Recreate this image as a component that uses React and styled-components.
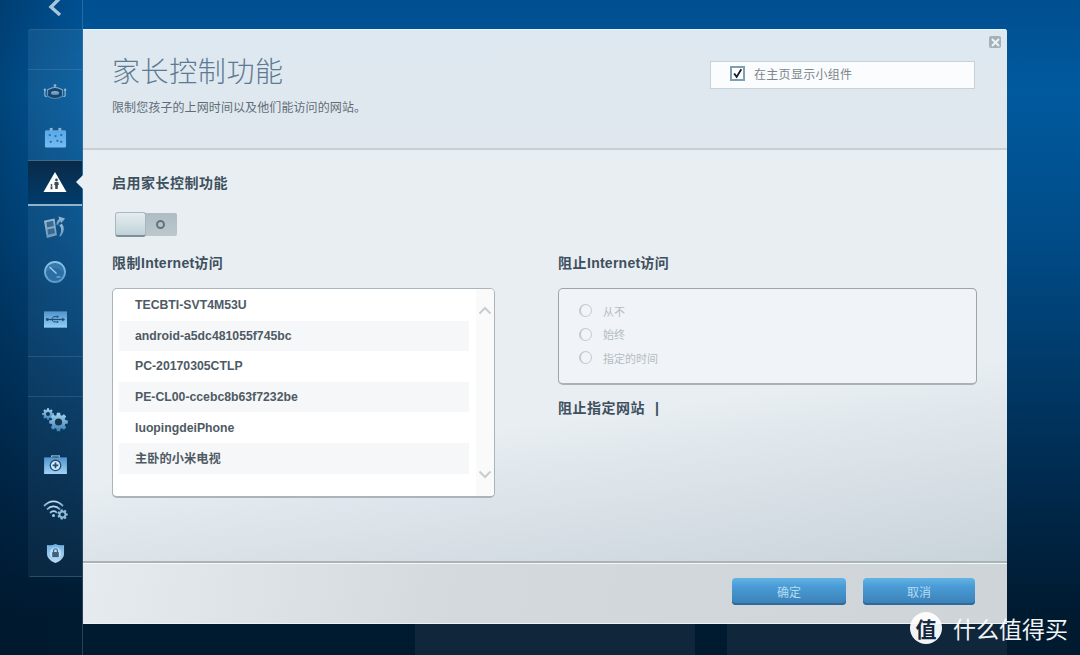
import React from "react";
import styled, { createGlobalStyle } from "styled-components";

const Global = createGlobalStyle`
  html, body { margin: 0; padding: 0; background: #001a30; }
  * { box-sizing: border-box; }
`;

const CJK = `"Noto Sans CJK SC", "Liberation Sans", sans-serif`;

const Page = styled.div`
  position: relative;
  width: 1080px;
  height: 655px;
  overflow: hidden;
  display: flex;
  padding-left: 28px;
  font-family: ${CJK};
  background:
    linear-gradient(90deg, rgba(0, 22, 44, 0.3) 0, rgba(0, 22, 44, 0) 84px),
    linear-gradient(180deg, #004f90 0%, #005a9e 14%, #004c88 36%, #003a69 56%, #00284a 76%, #001a30 94%);
`;

const Rail = styled.aside`
  width: 55px;
  height: 655px;
  flex: none;
  display: flex;
  flex-direction: column;
  border-right: 1px solid rgba(170, 205, 230, 0.22);
`;

const BackSlot = styled.div`
  height: 29px;
  display: flex;
  justify-content: center;
  align-items: flex-start;
  svg { display: block; margin-top: -4px; }
`;

const Nav = styled.nav`
  height: 548px;
  display: flex;
  flex-direction: column;
  background: linear-gradient(180deg, rgba(90, 150, 190, 0.18), rgba(70, 110, 140, 0.13));
  border: solid rgba(170, 205, 230, 0.17);
  border-width: 1px 0;
  border-radius: 3px 0 0 3px;
`;

const NavGap = styled.div`
  flex: none;
  height: ${p => p.$h}px;
  border-bottom: 1px solid rgba(170, 205, 230, 0.16);
`;

const NavGroup = styled.div`
  flex: none;
  padding-top: ${p => p.$top || 0}px;
`;

const NavItem = styled.div`
  position: relative;
  height: ${p => p.$h || 44.5}px;
  display: flex;
  align-items: center;
  justify-content: center;
  ${p => p.$active && `
    background: linear-gradient(180deg, #0a2a48, #003c6c);
    border-top: 1px solid #3c6a8c;
    border-bottom: 2px solid #8fb4cc;
  `}
`;

const ActiveNotch = styled.span`
  position: absolute;
  right: -1px;
  top: 50%;
  margin-top: -7px;
  border: 7px solid transparent;
  border-right-color: #e8eef2;
  border-left-width: 0;
`;

const Main = styled.div`
  width: 924px;
  flex: none;
  display: flex;
  flex-direction: column;
`;

const Dialog = styled.section`
  position: relative;
  margin-top: 29px;
  height: 595px;
  flex: none;
  display: flex;
  flex-direction: column;
  border-radius: 0 3px 0 0;
  overflow: hidden;
  background: #e6ecf0;
`;

const Header = styled.header`
  height: 121px;
  flex: none;
  display: flex;
  justify-content: space-between;
  padding: 0 32px 0 29px;
  background: linear-gradient(180deg, #dee8f0, #e0e8ee);
  border-top: 1px solid #e8f4fa;
  border-bottom: 2px solid #c8d0d5;
`;

const TitleBlock = styled.div`
  padding-top: 22px;
`;

const Title = styled.h1`
  margin: 0;
  font-size: 28px;
  line-height: 36px;
  font-weight: 300;
  letter-spacing: 0.6px;
  color: #5c7a92;
`;

const Subtitle = styled.p`
  margin: 10px 0 0;
  font-size: 12px;
  line-height: 18px;
  letter-spacing: 0.1px;
  color: #5f6d78;
`;

const WidgetToggle = styled.label`
  margin-top: 31px;
  width: 265px;
  height: 28px;
  display: flex;
  align-items: center;
  gap: 9px;
  padding: 0 0 3px 19px;
  background: #fafcfd;
  border: 1px solid #c6d1d9;
  font-size: 12px;
  letter-spacing: 0.3px;
  color: #7b858c;
`;

const CheckBox = styled.span`
  width: 15px;
  height: 15px;
  display: flex;
  align-items: center;
  justify-content: center;
  background: #fff;
  border: 2px solid #7f9fb4;
`;

const CloseButton = styled.button`
  position: absolute;
  top: 7px;
  right: 6px;
  width: 12px;
  height: 12px;
  padding: 0;
  border: none;
  border-radius: 2px;
  background: #a4b1ba;
  display: flex;
  align-items: center;
  justify-content: center;
`;

const Body = styled.div`
  flex: 1;
  padding: 21px 29px 0;
  background:
    linear-gradient(172deg, rgba(255,255,255,0) 62%, rgba(190,202,210,0.75) 100%),
    #e8eef2;
`;

const SectionLabel = styled.h2`
  margin: 0;
  font-size: 14px;
  line-height: 22px;
  font-weight: 700;
  letter-spacing: 0.5px;
  color: #3f505d;
`;

const LatinWord = styled.span`
  font-family: "Liberation Sans", sans-serif;
  letter-spacing: 0.25px;
`;

const Switch = styled.div`
  margin: 19px 0 0 3px;
  width: 62px;
  height: 25px;
  position: relative;
  display: flex;
  justify-content: flex-end;
`;

const SwitchTrack = styled.div`
  width: 33px;
  margin: 1px 0;
  display: flex;
  align-items: center;
  justify-content: center;
  background: linear-gradient(180deg, #aebcc3, #bcc7cc);
  border-radius: 0 2px 2px 0;
`;

const SwitchDot = styled.span`
  width: 9px;
  height: 9px;
  border-radius: 50%;
  border: 2px solid #5f7482;
`;

const SwitchThumb = styled.div`
  position: absolute;
  left: 0;
  top: 0;
  width: 31px;
  height: 25px;
  border-radius: 3px;
  background: linear-gradient(180deg, #e4edf0, #c0d2d8);
  border: 1px solid #aab8be;
  border-bottom: 2px solid #7f8f97;
`;

const Columns = styled.div`
  margin-top: 14px;
  display: flex;
  gap: 63px;
`;

const ColLeft = styled.div`
  width: 383px;
  flex: none;
`;

const ColRight = styled.div`
  width: 419px;
  flex: none;
`;

const DeviceBox = styled.div`
  margin-top: 14px;
  height: 210px;
  display: flex;
  justify-content: space-between;
  background: #fff;
  border: 1px solid #aab4bb;
  border-bottom: 2px solid #aab4bb;
  border-radius: 5px;
  overflow: hidden;
`;

const DeviceList = styled.ul`
  list-style: none;
  margin: 0;
  padding: 1px 0 0 6px;
  width: 356px;
`;

const Device = styled.li`
  height: 30.6px;
  display: flex;
  align-items: center;
  padding-left: 16px;
  font-family: "Liberation Sans", "Noto Sans CJK SC", sans-serif;
  font-size: 12.25px;
  font-weight: 700;
  color: #4e5a64;
  background: ${p => (p.$alt ? "#f6f7f8" : "transparent")};
`;

const ScrollBar = styled.div`
  width: 18px;
  display: flex;
  flex-direction: column;
  justify-content: space-between;
  align-items: center;
  padding: 17px 0;
  background: #fafafa;
`;

const BlockPanel = styled.div`
  margin-top: 14px;
  height: 97px;
  padding: 11.5px 0 0 20px;
  display: flex;
  flex-direction: column;
  gap: 3px;
  background: #f0f4f8;
  border: 1px solid #9aa5ad;
  border-bottom: 2px solid #a8b2b9;
  border-radius: 5px;
`;

const RadioRow = styled.div`
  height: 20.5px;
  display: flex;
  align-items: center;
  gap: 11px;
  font-size: 11px;
  color: #b4bcc2;
`;

const RadioDot = styled.span`
  width: 13px;
  height: 13px;
  border-radius: 50%;
  border: 1px solid #c3cbd0;
  border-left-width: 2px;
  background: #f2f5f8;
`;

const SiteLabel = styled(SectionLabel)`
  margin-top: 11px;
`;

const Caret = styled.span`
  margin-left: 10px;
  font-family: "Liberation Sans", sans-serif;
`;

const Footer = styled.footer`
  height: 63px;
  flex: none;
  display: flex;
  justify-content: flex-end;
  gap: 17px;
  padding: 15px 32px 0 0;
  background: linear-gradient(100deg, #e6ebef 0%, #d4d9dd 40%, #ced4d8 100%);
  border-top: 2px solid #aab3b8;
  box-shadow: inset 0 1px 0 #f4f7f8;
  border-bottom: 1px solid #eef2f4;
`;

const ActionButton = styled.button`
  width: ${p => p.$w}px;
  height: 27px;
  padding: 0;
  border: none;
  border-radius: 4px;
  font-family: ${CJK};
  font-size: 12px;
  color: #b4dcf2;
  background: linear-gradient(180deg, #62b4e6 0%, #4a9cd6 30%, #3a7fb6 100%);
  box-shadow: inset 0 -2px 0 #2f6a98;
`;

const BackCards = styled.div`
  flex: 1;
  display: flex;
  gap: 32px;
  padding-left: 332px;
`;

const BackCard = styled.div`
  width: 280px;
  background: #10263b;
`;

const Watermark = styled.div`
  position: absolute;
  left: 910px;
  top: 612px;
  display: flex;
  align-items: center;
  gap: 11px;
  font-size: 23px;
  line-height: 32px;
  color: #fff;
  opacity: 0.95;
`;

const WaterBadge = styled.span`
  width: 32px;
  height: 32px;
  border-radius: 50%;
  background: #fff;
  color: #10263b;
  font-size: 21px;
  font-weight: 700;
  line-height: 32px;
  text-align: center;
`;

const Grad = ({ id, from = "#7fc0ee", to = "#3f86c0" }) => (
  <defs>
    <linearGradient id={id} x1="0" y1="0" x2="0" y2="1">
      <stop offset="0" stopColor={from} />
      <stop offset="1" stopColor={to} />
    </linearGradient>
  </defs>
);

const RouterIcon = () => (
  <svg width="24" height="19" viewBox="0 0 26 20">
    <Grad id="r1" from="#8fb6d2" to="#5688ae" />
    <path d="M5 7c3-1.500 5-2.500 8-2.500s5 1 8 2.500v7c-3 1.800-5 2.500-8 2.500s-5-.7-8-2.500z" fill="#15446c" stroke="url(#r1)" strokeWidth="1.100" />
    <ellipse cx="13" cy="10.500" rx="4.500" ry="2.200" fill="url(#r1)" />
    <circle cx="13" cy="2.500" r="1.500" fill="#8fb6d2" />
    <circle cx="2" cy="7" r="1.300" fill="#8fb6d2" />
    <circle cx="24" cy="7" r="1.300" fill="#8fb6d2" />
    <path d="M2 7v6c0 1 1 1.500 2 1.500M24 7v6c0 1-1 1.500-2 1.500" stroke="#8fb6d2" strokeWidth="1.300" fill="none" />
  </svg>
);

const CalendarIcon = () => (
  <svg width="23" height="21" viewBox="0 0 24 21">
    <Grad id="c1" from="#58a8ea" to="#74bcf2" />
    <rect x="1" y="3" width="22" height="18" rx="1.500" fill="url(#c1)" />
    <rect x="6" y="0.500" width="3" height="3" fill="#8fb4cc" />
    <rect x="15" y="0.500" width="3" height="3" fill="#8fb4cc" />
    {[[6, 8], [12, 9], [18, 8], [7, 15], [14, 14], [18, 15]].map(([x, y]) => (
      <circle key={x + "-" + y} cx={x} cy={y} r="1.200" fill="#2a6ca6" />
    ))}
  </svg>
);

const ParentalIcon = () => (
  <svg width="24" height="22" viewBox="0 0 24 22">
    <path d="M12 1L23.500 21H.500z" fill="#fff" />
    <circle cx="13.500" cy="9" r="1.400" fill="#3a4c5c" />
    <path d="M11.700 11h3.600l.5 3h-.9l-.2 4h-2.400l-.2-4h-.9z" fill="#3a4c5c" />
    <circle cx="8.500" cy="14" r="0.900" fill="#3a4c5c" />
    <path d="M7.600 15.300h1.800v3H7.600z" fill="#3a4c5c" />
  </svg>
);

const UpdateIcon = () => (
  <svg width="24" height="23" viewBox="0 0 25 24">
    <Grad id="u1" from="#9cbdd6" to="#6d9abc" />
    <path d="M1 5l11-2.500L14.500 20 4 23z" fill="url(#u1)" />
    <path d="M3.500 6.500l7-1.500 .8 5.500-7 1.500zM4.600 14l7-1.500 .8 5.500-7 1.500z" fill="#3a6a90" />
    <path d="M14 9c0-3 1-5 3-6l-1-2.500 7 2-4 5-1-2c-1.200 1-1.800 2-2 3.500z" fill="url(#u1)" />
    <path d="M19.500 8c3 3 3 8-1 13-1 .5-1.500.3-1.500-.3 2-3 3-8 0-11z" fill="url(#u1)" />
  </svg>
);

const GaugeIcon = () => (
  <svg width="22" height="22" viewBox="0 0 22 22">
    <Grad id="g1" from="#8cc4ea" to="#5a9cc8" />
    <circle cx="11" cy="11" r="10" fill="#2a6ea4" stroke="url(#g1)" strokeWidth="1.800" />
    <path d="M2.500 11a8.500 8.500 0 0117 0c-3-1.500-5-4-8.500-4s-5.500 2.500-8.500 4z" fill="#3f86b8" opacity="0.55" />
    <path d="M5.500 6l7 6.500" stroke="#a8d0ec" strokeWidth="1.300" />
    <path d="M12.500 16h4" stroke="#7ab0d6" strokeWidth="1.300" />
  </svg>
);

const UsbIcon = () => (
  <svg width="23" height="17" viewBox="0 0 24 17">
    <Grad id="s1" from="#4f94cc" to="#93cff4" />
    <rect width="24" height="17" fill="url(#s1)" />
    <path d="M3 8.500h17" stroke="#1d4f78" strokeWidth="1.300" />
    <path d="M19 6.500l3 2-3 2z" fill="#1d4f78" />
    <circle cx="3.500" cy="8.500" r="1.500" fill="#1d4f78" />
    <path d="M8 8.500l2-3h3M8 8.500l2 2.500h3" stroke="#1d4f78" strokeWidth="1" fill="none" />
    <rect x="13" y="4.500" width="2" height="2" fill="#1d4f78" />
    <circle cx="14" cy="11" r="1" fill="#1d4f78" />
  </svg>
);

const gearPath = (cx, cy, r, n = 8) => {
  let d = "";
  for (let i = 0; i < n; i++) {
    const a = (i / n) * Math.PI * 2;
    const w = Math.PI / n / 1.600;
    const pts = [
      [r * 0.78, a - w * 1.200],
      [r * 1.050, a - w * 0.700],
      [r * 1.050, a + w * 0.700],
      [r * 0.78, a + w * 1.200],
    ];
    pts.forEach(([rr, t], j) => {
      const x = (cx + rr * Math.cos(t)).toFixed(2);
      const y = (cy + rr * Math.sin(t)).toFixed(2);
      d += (i === 0 && j === 0 ? "M" : "L") + x + " " + y;
    });
  }
  return d + "Z";
};

const GearsIcon = () => (
  <svg width="26" height="24" viewBox="0 0 26 24">
    <Grad id="gr1" from="#a5d4f4" to="#3f80b4" />
    <path d={gearPath(6, 6, 5.500)} fill="url(#gr1)" />
    <circle cx="6" cy="6" r="2" fill="#16354f" />
    <path d={gearPath(16.500, 14, 9)} fill="url(#gr1)" />
    <circle cx="16.500" cy="14" r="3.600" fill="#16354f" />
  </svg>
);

const KitIcon = () => (
  <svg width="23" height="19" viewBox="0 0 24 20">
    <Grad id="k1" from="#4f94cc" to="#a2d4f4" />
    <path d="M8 3V1h8v2" fill="none" stroke="#8fb4cc" strokeWidth="1.400" />
    <rect y="2.500" width="24" height="17.500" fill="url(#k1)" />
    <circle cx="12" cy="11" r="5.500" fill="#d6ecfa" stroke="#1e4f78" strokeWidth="1.400" />
    <path d="M12 8v6M9 11h6" stroke="#1e4f78" strokeWidth="1.800" />
  </svg>
);

const WifiIcon = () => (
  <svg width="25" height="21" viewBox="0 0 25 21">
    <Grad id="w1" from="#c0dcf0" to="#6ea4cc" />
    <path d="M1 7c6-6 13-6 19 0" fill="none" stroke="url(#w1)" strokeWidth="1.800" />
    <path d="M4 10.500c4-4 9-4 13 0" fill="none" stroke="url(#w1)" strokeWidth="1.800" />
    <path d="M7 14c2.500-2.500 5-2.500 7 0" fill="none" stroke="url(#w1)" strokeWidth="1.800" />
    <circle cx="10.500" cy="16.500" r="1.500" fill="#a5cbe6" />
    <path d={gearPath(19.500, 15.500, 5, 7)} fill="#8ebcdc" />
    <circle cx="19.500" cy="15.500" r="2" fill="#16354f" />
  </svg>
);

const ShieldIcon = () => (
  <svg width="19" height="21" viewBox="0 0 20 22">
    <Grad id="sh1" from="#6cb0e4" to="#bcdcf2" />
    <path d="M1 2c3 .6 6 .4 9-1 3 1.400 6 1.600 9 1v9c0 5-4 8-9 10-5-2-9-5-9-10z" fill="url(#sh1)" />
    <circle cx="10" cy="10.500" r="6" fill="#cfe2ef" opacity="0.8" />
    <rect x="6.500" y="9.500" width="7" height="5.500" rx="0.800" fill="#3a6484" />
    <path d="M8 9.500V8a2 2 0 014 0v1.500" fill="none" stroke="#3a6484" strokeWidth="1.200" />
  </svg>
);

const devices = [
  "TECBTI-SVT4M53U",
  "android-a5dc481055f745bc",
  "PC-20170305CTLP",
  "PE-CL00-ccebc8b63f7232be",
  "luopingdeiPhone",
  "主卧的小米电视",
];

export default function App() {
  return (
    <Page>
      <Global />
      <Rail>
        <BackSlot>
          <svg width="16" height="22" viewBox="0 0 16 22">
            <path d="M13 2L4 11l9 8" fill="none" stroke="#a6c6dc" strokeWidth="3.400" />
          </svg>
        </BackSlot>
        <Nav>
          <NavGap $h={40} />
          <NavGroup>
            <NavItem $h={45}><RouterIcon /></NavItem>
            <NavItem><CalendarIcon /></NavItem>
            <NavItem $active $h={46}><ParentalIcon /><ActiveNotch /></NavItem>
            <NavItem><UpdateIcon /></NavItem>
            <NavItem><GaugeIcon /></NavItem>
            <NavItem $h={49}><UsbIcon /></NavItem>
          </NavGroup>
          <NavGap $h={13} />
          <NavGap $h={40} />
          <NavGroup $top={1.500}>
            <NavItem><GearsIcon /></NavItem>
            <NavItem><KitIcon /></NavItem>
            <NavItem><WifiIcon /></NavItem>
            <NavItem><ShieldIcon /></NavItem>
          </NavGroup>
        </Nav>
      </Rail>
      <Main>
        <Dialog>
          <Header>
            <TitleBlock>
              <Title>家长控制功能</Title>
              <Subtitle>限制您孩子的上网时间以及他们能访问的网站。</Subtitle>
            </TitleBlock>
            <WidgetToggle>
              <CheckBox>
                <svg width="13" height="13" viewBox="0 0 13 13">
                  <path d="M2.500 6.500l3 4 5.500-9" fill="none" stroke="#16202a" strokeWidth="2.200" />
                </svg>
              </CheckBox>
              在主页显示小组件
            </WidgetToggle>
          </Header>
          <CloseButton aria-label="close">
            <svg width="9" height="9" viewBox="0 0 9 9">
              <path d="M1 1l7 7M8 1L1 8" stroke="#eef3f6" strokeWidth="2" />
            </svg>
          </CloseButton>
          <Body>
            <SectionLabel>启用家长控制功能</SectionLabel>
            <Switch>
              <SwitchTrack><SwitchDot /></SwitchTrack>
              <SwitchThumb />
            </Switch>
            <Columns>
              <ColLeft>
                <SectionLabel>限制<LatinWord>Internet</LatinWord>访问</SectionLabel>
                <DeviceBox>
                  <DeviceList>
                    {devices.map((d, i) => (
                      <Device key={d} $alt={i % 2 === 1}>{d}</Device>
                    ))}
                  </DeviceList>
                  <ScrollBar>
                    <svg width="14" height="9" viewBox="0 0 14 9">
                      <path d="M1.500 7.500L7 2l5.500 5.500" fill="none" stroke="#c6ced3" strokeWidth="2" />
                    </svg>
                    <svg width="14" height="9" viewBox="0 0 14 9">
                      <path d="M1.500 1.500L7 7l5.500-5.500" fill="none" stroke="#c6ced3" strokeWidth="2" />
                    </svg>
                  </ScrollBar>
                </DeviceBox>
              </ColLeft>
              <ColRight>
                <SectionLabel>阻止<LatinWord>Internet</LatinWord>访问</SectionLabel>
                <BlockPanel>
                  <RadioRow><RadioDot />从不</RadioRow>
                  <RadioRow><RadioDot />始终</RadioRow>
                  <RadioRow><RadioDot />指定的时间</RadioRow>
                </BlockPanel>
                <SiteLabel>阻止指定网站<Caret>|</Caret></SiteLabel>
              </ColRight>
            </Columns>
          </Body>
          <Footer>
            <ActionButton $w={114}>确定</ActionButton>
            <ActionButton $w={112}>取消</ActionButton>
          </Footer>
        </Dialog>
        <BackCards>
          <BackCard />
          <BackCard />
        </BackCards>
      </Main>
      <Watermark>
        <WaterBadge>值</WaterBadge>
        什么值得买
      </Watermark>
    </Page>
  );
}
